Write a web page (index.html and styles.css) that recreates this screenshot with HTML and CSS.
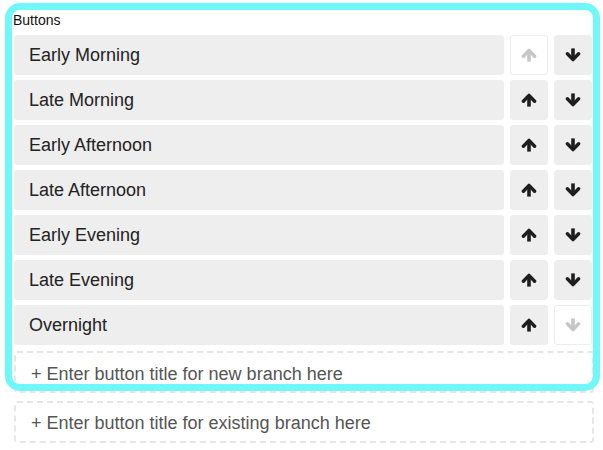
FILE: index.html
```html
<!DOCTYPE html>
<html lang="en">
<head>
  <meta charset="UTF-8">
  <title>Buttons</title>
  <link rel="stylesheet" href="styles.css">
</head>
<body>
  <div class="editor">
    <div class="title">Buttons</div>
    <div class="rows">
      <div class="row">
        <div class="label">Early Morning</div>
        <button class="move disabled"><svg class="arrow" viewBox="0 0 16 14"><polyline points="2.4,8.2 8,2.4 13.6,8.2"/><line x1="8" y1="3.5" x2="8" y2="13.6"/></svg></button>
        <button class="move"><svg class="arrow down" viewBox="0 0 16 14"><polyline points="2.4,8.2 8,2.4 13.6,8.2"/><line x1="8" y1="3.5" x2="8" y2="13.6"/></svg></button>
      </div>
      <div class="row">
        <div class="label">Late Morning</div>
        <button class="move"><svg class="arrow" viewBox="0 0 16 14"><polyline points="2.4,8.2 8,2.4 13.6,8.2"/><line x1="8" y1="3.5" x2="8" y2="13.6"/></svg></button>
        <button class="move"><svg class="arrow down" viewBox="0 0 16 14"><polyline points="2.4,8.2 8,2.4 13.6,8.2"/><line x1="8" y1="3.5" x2="8" y2="13.6"/></svg></button>
      </div>
      <div class="row">
        <div class="label">Early Afternoon</div>
        <button class="move"><svg class="arrow" viewBox="0 0 16 14"><polyline points="2.4,8.2 8,2.4 13.6,8.2"/><line x1="8" y1="3.5" x2="8" y2="13.6"/></svg></button>
        <button class="move"><svg class="arrow down" viewBox="0 0 16 14"><polyline points="2.4,8.2 8,2.4 13.6,8.2"/><line x1="8" y1="3.5" x2="8" y2="13.6"/></svg></button>
      </div>
      <div class="row">
        <div class="label">Late Afternoon</div>
        <button class="move"><svg class="arrow" viewBox="0 0 16 14"><polyline points="2.4,8.2 8,2.4 13.6,8.2"/><line x1="8" y1="3.5" x2="8" y2="13.6"/></svg></button>
        <button class="move"><svg class="arrow down" viewBox="0 0 16 14"><polyline points="2.4,8.2 8,2.4 13.6,8.2"/><line x1="8" y1="3.5" x2="8" y2="13.6"/></svg></button>
      </div>
      <div class="row">
        <div class="label">Early Evening</div>
        <button class="move"><svg class="arrow" viewBox="0 0 16 14"><polyline points="2.4,8.2 8,2.4 13.6,8.2"/><line x1="8" y1="3.5" x2="8" y2="13.6"/></svg></button>
        <button class="move"><svg class="arrow down" viewBox="0 0 16 14"><polyline points="2.4,8.2 8,2.4 13.6,8.2"/><line x1="8" y1="3.5" x2="8" y2="13.6"/></svg></button>
      </div>
      <div class="row">
        <div class="label">Late Evening</div>
        <button class="move"><svg class="arrow" viewBox="0 0 16 14"><polyline points="2.4,8.2 8,2.4 13.6,8.2"/><line x1="8" y1="3.5" x2="8" y2="13.6"/></svg></button>
        <button class="move"><svg class="arrow down" viewBox="0 0 16 14"><polyline points="2.4,8.2 8,2.4 13.6,8.2"/><line x1="8" y1="3.5" x2="8" y2="13.6"/></svg></button>
      </div>
      <div class="row">
        <div class="label">Overnight</div>
        <button class="move"><svg class="arrow" viewBox="0 0 16 14"><polyline points="2.4,8.2 8,2.4 13.6,8.2"/><line x1="8" y1="3.5" x2="8" y2="13.6"/></svg></button>
        <button class="move disabled"><svg class="arrow down" viewBox="0 0 16 14"><polyline points="2.4,8.2 8,2.4 13.6,8.2"/><line x1="8" y1="3.5" x2="8" y2="13.6"/></svg></button>
      </div>
    </div>
    <div class="add new-branch">+ Enter button title for new branch here</div>
    <div class="add existing">+ Enter button title for existing branch here</div>
    <div class="highlight"></div>
  </div>
</body>
</html>
```

FILE: styles.css
```css
body {
  margin: 0;
  background: #fff;
  font-family: "Liberation Sans", Arial, sans-serif;
  color: #222;
}

.editor {
  position: relative;
  width: 580px;
  padding: 11px 9px 0 14px;
}

.title {
  margin-left: -1px;
  font-size: 14px;
  line-height: 18px;
  color: #111;
  margin-bottom: 6px;
}

.rows {
  display: flex;
  flex-direction: column;
  gap: 5px;
  margin-right: 2px;
}

.row {
  display: flex;
  gap: 6px;
  height: 40px;
}

.label {
  flex: 1;
  display: flex;
  align-items: center;
  padding-left: 15px;
  background: #eee;
  border-radius: 3px;
  font-size: 18px;
  color: #222;
}

.move {
  width: 38px;
  padding: 0;
  border: 1px solid #eee;
  border-radius: 3px;
  background: #eee;
  display: flex;
  align-items: center;
  justify-content: center;
  stroke: #1e1e1e;
}

.move.disabled {
  background: #fff;
  stroke: #c6c6c6;
}

.arrow {
  width: 16px;
  height: 14px;
  fill: none;
}

.arrow polyline {
  stroke-width: 3.4;
  stroke-linecap: round;
  stroke-linejoin: round;
}

.arrow line {
  stroke-width: 3.6;
}

.arrow.down {
  transform: rotate(180deg);
}

.add {
  box-sizing: border-box;
  display: flex;
  align-items: center;
  padding-left: 15px;
  border: 2px dashed #e6e6e6;
  border-radius: 3px;
  font-size: 18px;
  color: #555;
}

.new-branch {
  margin-top: 6px;
  height: 42px;
  padding-top: 4px;
}

.existing {
  margin-top: 8px;
  height: 42px;
  padding-top: 3px;
}

.highlight {
  position: absolute;
  left: 5px;
  top: 3px;
  width: 595px;
  height: 388px;
  box-sizing: border-box;
  border: 7px solid #6ff7fa;
  border-radius: 15px;
  pointer-events: none;
}
```
